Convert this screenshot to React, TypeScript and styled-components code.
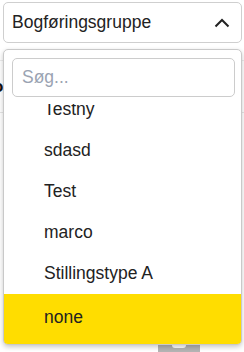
import React from "react";
import styled, { createGlobalStyle } from "styled-components";

const Global = createGlobalStyle`
  html, body { margin: 0; padding: 0; background: #ffffff; }
  body { font-family: "Liberation Sans", Arial, sans-serif; overflow: hidden; }
  * { box-sizing: border-box; }
`;

const Page = styled.div`
  position: relative;
  width: 244px;
  height: 352px;
  overflow: hidden;
  display: flex;
  flex-direction: column;
`;

const SelectBox = styled.div`
  margin: 2px 2px 0 3px;
  height: 41px;
  border: 1px solid #cfcfcf;
  border-radius: 5px;
  display: flex;
  align-items: center;
  justify-content: space-between;
  padding: 0 11px 0 8px;
  font-size: 17.5px;
  color: #222222;
  background: #ffffff;
`;

const Chevron = styled.svg`
  width: 16px;
  height: 10px;
  display: block;
`;

const BackRow = styled.div`
  margin-top: 17px;
  height: 53px;
  border-top: 1px solid #ececec;
  border-bottom: 1px solid #e6e6e6;
  display: flex;
  align-items: center;
`;

const BackText = styled.span`
  font-size: 17px;
  font-weight: 700;
  color: #111111;
  margin-left: -7px;
`;

const Spacer = styled.div`
  flex: 1;
`;

const BottomRow = styled.div`
  display: flex;
  justify-content: flex-start;
  padding-left: 158px;
`;

const ToggleStub = styled.div`
  width: 42px;
  height: 8px;
  background: #b4b4b4;
  display: flex;
  justify-content: center;
`;

const Notch = styled.div`
  width: 14px;
  height: 4px;
  background: #ffffff;
  border-radius: 0 0 3px 3px;
`;

const Panel = styled.div`
  position: absolute;
  top: 49px;
  left: 3px;
  width: 239px;
  height: 296px;
  border: 1px solid #c9c9c9;
  border-radius: 5px;
  background: #ffffff;
  box-shadow: 0 2px 5px rgba(0, 0, 0, 0.22);
  overflow: hidden;
  display: flex;
  flex-direction: column;
`;

const SearchArea = styled.div`
  padding: 8px 6px 7px 8px;
  flex: none;
`;

const SearchInput = styled.input`
  width: 100%;
  height: 39px;
  border: 1px solid #cccccc;
  border-radius: 5px;
  padding: 0 9px;
  font-family: "Liberation Sans", Arial, sans-serif;
  font-size: 17.5px;
  color: #222222;
  outline: none;
  &::placeholder {
    color: #9aa3b2;
  }
`;

const List = styled.div`
  flex: 1;
  min-height: 0;
  overflow: hidden;
  display: flex;
  flex-direction: column;
  justify-content: flex-end;
`;

const Item = styled.div<{ $active?: boolean }>`
  flex: none;
  height: ${(p) => (p.$active ? "50px" : "41px")};
  padding: ${(p) => (p.$active ? "13px 0 17px 40px" : "10px 0 11px 40px")};
  line-height: 20px;
  font-size: 17.5px;
  color: #222222;
  background: ${(p) => (p.$active ? "#ffdd00" : "transparent")};
`;

const items = ["Testny", "sdasd", "Test", "marco", "Stillingstype A"];

export default function App() {
  return (
    <>
      <Global />
      <Page>
        <SelectBox>
          <span>Bogføringsgruppe</span>
          <Chevron viewBox="0 0 16 10">
            <path d="M1.5 8.5 L8 2 L14.5 8.5" fill="none" stroke="#222" strokeWidth="2" />
          </Chevron>
        </SelectBox>
        <BackRow>
          <BackText>o</BackText>
        </BackRow>
        <Spacer />
        <BottomRow>
          <ToggleStub>
            <Notch />
          </ToggleStub>
        </BottomRow>
        <Panel>
          <SearchArea>
            <SearchInput placeholder="Søg..." readOnly />
          </SearchArea>
          <List>
            {items.map((t) => (
              <Item key={t}>{t}</Item>
            ))}
            <Item $active>none</Item>
          </List>
        </Panel>
      </Page>
    </>
  );
}
